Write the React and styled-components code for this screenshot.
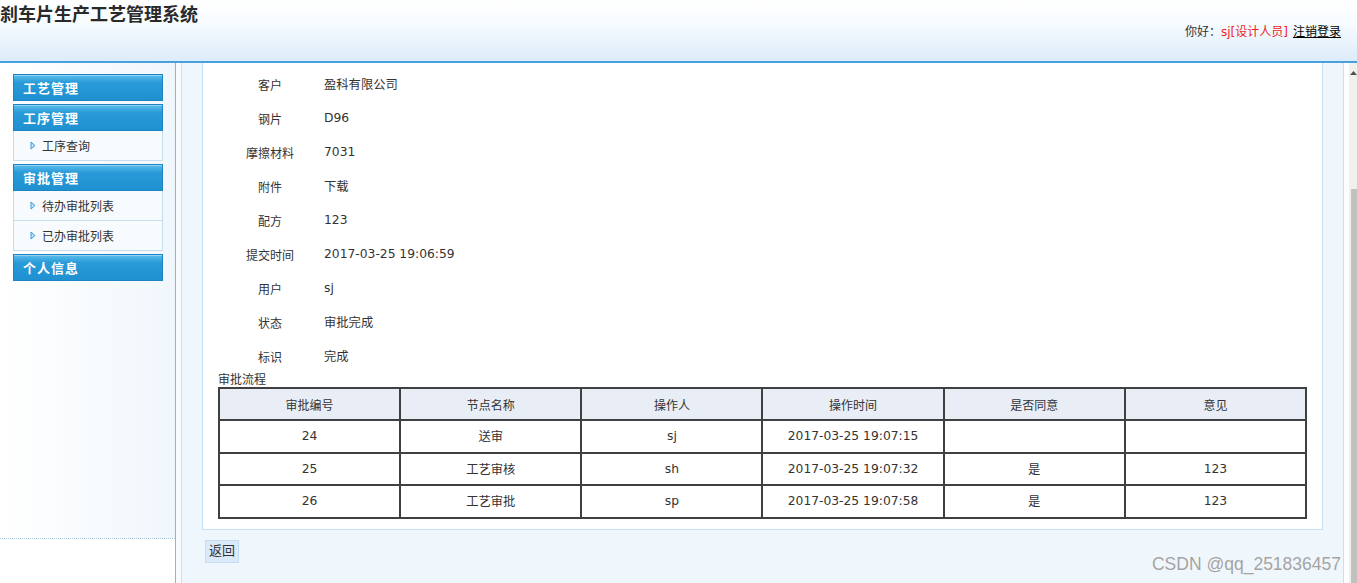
import React from 'react'
import styled, { createGlobalStyle } from 'styled-components'

const GlobalStyle = createGlobalStyle`
    html, body {
        margin: 0;
        padding: 0;
        height: 100%;
        overflow: hidden;
    }
    body {
        font-family: "DejaVu Sans", "Noto Sans CJK SC", sans-serif;
        font-size: 12px;
        color: #333;
        background: #fff;
    }
    #root {
        height: 100%;
    }
`

const menu = [
    { title: '工艺管理', items: [] },
    { title: '工序管理', items: ['工序查询'] },
    { title: '审批管理', items: ['待办审批列表', '已办审批列表'] },
    { title: '个人信息', items: [] },
]

const fields = [
    ['客户', '盈科有限公司'],
    ['钢片', 'D96'],
    ['摩擦材料', '7031'],
    ['附件', '下载'],
    ['配方', '123'],
    ['提交时间', '2017-03-25 19:06:59'],
    ['用户', 'sj'],
    ['状态', '审批完成'],
    ['标识', '完成'],
]

const columns = ['审批编号', '节点名称', '操作人', '操作时间', '是否同意', '意见']

const flow = [
    ['24', '送审', 'sj', '2017-03-25 19:07:15', '', ''],
    ['25', '工艺审核', 'sh', '2017-03-25 19:07:32', '是', '123'],
    ['26', '工艺审批', 'sp', '2017-03-25 19:07:58', '是', '123'],
]

function Arrow() {
    return (
        <svg width="6" height="9" viewBox="0 0 6 9">
            <polygon points="1,1 5,4.5 1,8" fill="#bfe0f6" stroke="#3f9bd8" strokeWidth="1" />
        </svg>
    )
}

function App() {
    return (
        <Page>
            <GlobalStyle />
            <Header>
                <Title>刹车片生产工艺管理系统</Title>
                <UserBar>
                    你好：<UserName>sj[设计人员]</UserName>
                    <Logout>注销登录</Logout>
                </UserBar>
            </Header>
            <Layout>
                <Sidebar>
                    <SideInner>
                        {menu.map(group => (
                            <Group key={group.title}>
                                <GroupTitle>{group.title}</GroupTitle>
                                {group.items.map(item => (
                                    <MenuItem key={item}>
                                        <Arrow />
                                        {item}
                                    </MenuItem>
                                ))}
                            </Group>
                        ))}
                    </SideInner>
                </Sidebar>
                <Main>
                    <Frame>
                        <Panel>
                            {fields.map(([label, value]) => (
                                <FieldRow key={label}>
                                    <Label>{label}</Label>
                                    <Value>{value}</Value>
                                </FieldRow>
                            ))}
                            <Caption>审批流程</Caption>
                            <Table>
                                <thead>
                                    <tr>
                                        {columns.map(c => (
                                            <Th key={c}>{c}</Th>
                                        ))}
                                    </tr>
                                </thead>
                                <tbody>
                                    {flow.map(row => (
                                        <tr key={row[0]}>
                                            {row.map((cell, i) => (
                                                <Td key={i}>{cell}</Td>
                                            ))}
                                        </tr>
                                    ))}
                                </tbody>
                            </Table>
                        </Panel>
                        <ButtonBar>
                            <BackButton>返回</BackButton>
                        </ButtonBar>
                    </Frame>
                    <Gap />
                    <Scrollbar>
                        <ScrollArrow>
                            <svg width="7" height="4" viewBox="0 0 7 4">
                                <polygon points="0,4 3.5,0 7,4" fill="#505050" />
                            </svg>
                        </ScrollArrow>
                        <Thumb />
                    </Scrollbar>
                </Main>
            </Layout>
            <Watermark>CSDN @qq_251836457</Watermark>
        </Page>
    )
}

export default App

const Page = styled.div`
    position: relative;
    height: 100vh;
    display: flex;
    flex-direction: column;
`

const Header = styled.div`
    height: 61px;
    flex-shrink: 0;
    border-bottom: 2px solid #4a9fdd;
    background: linear-gradient(#ffffff 0%, #f6fbfe 40%, #dcecfa 100%);
    display: flex;
    flex-direction: column;
`

const Title = styled.div`
    padding-top: 3px;
    line-height: 20px;
    font-family: "Noto Sans CJK SC", sans-serif;
    font-size: 18px;
    font-weight: bold;
    color: #2a2a2a;
`

const UserBar = styled.div`
    display: flex;
    justify-content: flex-end;
    align-items: center;
    padding-right: 16px;
    margin-top: 1px;
    line-height: 16px;
    color: #333;
`

const UserName = styled.span`
    color: #f01e1e;
    margin-right: 5px;
`

const Logout = styled.span`
    color: #000;
    text-decoration: underline;
`

const Layout = styled.div`
    flex: 1;
    display: flex;
    min-height: 0;
`

const Sidebar = styled.div`
    width: 175px;
    flex-shrink: 0;
    border-right: 1px solid #8db6d5;
    background: #fff;
`

const SideInner = styled.div`
    height: 464px;
    padding: 11px 0 0 13px;
    border-bottom: 1px dotted #a6c8da;
    background: linear-gradient(to right, #ffffff 0%, #f0f7fc 100%);
`

const Group = styled.div`
    width: 150px;
    margin-bottom: 3px;
`

const GroupTitle = styled.div`
    height: 25px;
    line-height: 25px;
    padding-left: 9px;
    border: 1px solid #1c83c4;
    background: linear-gradient(#5bbdec 0%, #2a9bd8 30%, #1f90d0 100%);
    box-shadow: inset 0 1px 0 rgba(255, 255, 255, 0.35);
    color: #fff;
    font-family: "Noto Sans CJK SC", sans-serif;
    font-size: 13px;
    font-weight: bold;
    letter-spacing: 1px;
`

const MenuItem = styled.div`
    height: 29px;
    display: flex;
    align-items: center;
    gap: 6px;
    padding-left: 16px;
    border: 1px solid #c8dde9;
    border-top: none;
    background: #f7fbfe;
    color: #333;
`

const Main = styled.div`
    flex: 1;
    display: flex;
    padding-left: 5px;
    background: #f7fbfe;
    min-width: 0;
`

const Frame = styled.div`
    flex: 1;
    padding: 0 20px;
    border-left: 1px solid #c6e0f5;
    border-right: 1px solid #c6e0f5;
    background: #eff7fc;
    min-width: 0;
`

const Panel = styled.div`
    background: #fff;
    border: 1px solid #c6e0f5;
    border-top: none;
    padding: 4px 15px 10px 15px;
`

const FieldRow = styled.div`
    display: flex;
    height: 34px;
    align-items: center;
`

const Label = styled.div`
    width: 104px;
    text-align: center;
`

const Value = styled.div`
    padding-left: 2px;
    font-size: 12.3px;
`

const Caption = styled.div`
    line-height: 14px;
`

const Table = styled.table`
    width: 100%;
    border-collapse: collapse;
    table-layout: fixed;
    border: 2px solid #404040;
`

const Th = styled.th`
    height: 30px;
    padding: 0;
    border: 2px solid #404040;
    background: #e9eef6;
    font-weight: normal;
    color: #333;
`

const Td = styled.td`
    height: 30.5px;
    padding: 0;
    border: 2px solid #404040;
    text-align: center;
    font-size: 12.3px;
    color: #333;
`

const ButtonBar = styled.div`
    padding: 10px 0 0 3px;
`

const BackButton = styled.span`
    display: inline-block;
    padding: 2px 3px 3px;
    border: 1px solid #c5dcf4;
    background: #dbeaf9;
    font-size: 13px;
    line-height: 16px;
    color: #333;
`

const Gap = styled.div`
    width: 5px;
    flex-shrink: 0;
    background: #fff;
`

const Scrollbar = styled.div`
    width: 8px;
    flex-shrink: 0;
    display: flex;
    flex-direction: column;
    background: #f0f0f0;
`

const ScrollArrow = styled.div`
    height: 126px;
    display: flex;
    justify-content: flex-end;
    padding-top: 8px;
    box-sizing: border-box;
`

const Thumb = styled.div`
    flex: 1;
    margin-left: 2px;
    background: #c1c1c1;
`

const Watermark = styled.div`
    position: absolute;
    right: 16px;
    bottom: 9px;
    font-family: "Liberation Sans", Arial, sans-serif;
    font-size: 17.5px;
    line-height: 20px;
    color: #a3a3a3;
    text-shadow: 0 0 1px rgba(255, 255, 255, 0.8);
    pointer-events: none;
`
